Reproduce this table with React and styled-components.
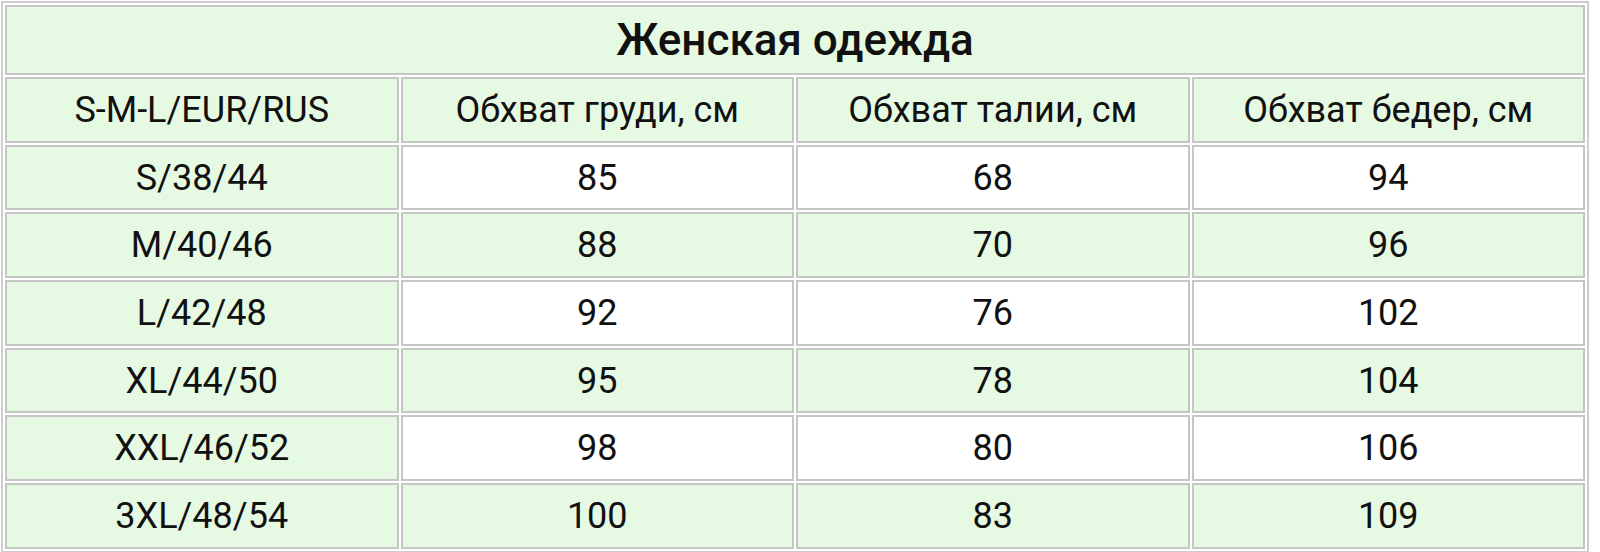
import React from 'react';
import styled, { createGlobalStyle } from 'styled-components';

const GlobalStyle = createGlobalStyle`
  body {
    margin: 0;
    padding: 1px 0 0 1px;
    background: #ffffff;
    font-family: Roboto, "Noto Sans", sans-serif;
    color: #111111;
  }
`;

const GREEN = '#e6f9e3';

const Table = styled.table`
  width: 1588px;
  border-collapse: separate;
  border-spacing: 2px;
  border: 2px solid #cdcdcd;
  table-layout: fixed;
`;

const Cell = styled.td`
  height: 61.7px;
  padding: 0;
  border: 2px solid #c6c6c6;
  background: ${({ $green }) => ($green ? GREEN : '#ffffff')};
  text-align: center;
  vertical-align: middle;
  font-size: 36px;
  font-weight: 400;
  line-height: 1;
`;

const TitleCell = styled(Cell)`
  height: 66px;
  font-size: 44px;
  font-weight: 500;
  background: ${GREEN};
`;

const headers = ['S-M-L/EUR/RUS', 'Обхват груди, см', 'Обхват талии, см', 'Обхват бедер, см'];

const rows = [
  ['S/38/44', 85, 68, 94],
  ['M/40/46', 88, 70, 96],
  ['L/42/48', 92, 76, 102],
  ['XL/44/50', 95, 78, 104],
  ['XXL/46/52', 98, 80, 106],
  ['3XL/48/54', 100, 83, 109],
];

const App = () => (
  <>
    <GlobalStyle />
    <Table>
      <tbody>
        <tr>
          <TitleCell colSpan={4}>Женская одежда</TitleCell>
        </tr>
        <tr>
          {headers.map((h) => (
            <Cell $green key={h} as="th">
              {h}
            </Cell>
          ))}
        </tr>
        {rows.map((row, i) => (
          <tr key={row[0]}>
            {row.map((value, j) => (
              <Cell $green={j === 0 || i % 2 === 1} key={j}>
                {value}
              </Cell>
            ))}
          </tr>
        ))}
      </tbody>
    </Table>
  </>
);

export default App;
